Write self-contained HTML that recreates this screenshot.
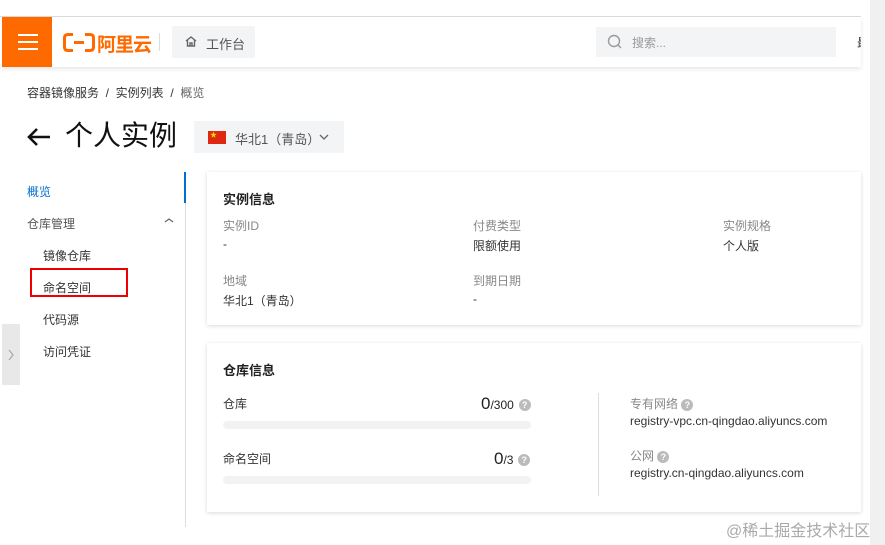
<!DOCTYPE html>
<html><head><meta charset="utf-8"><style>
*{margin:0;padding:0;box-sizing:border-box}
body{width:885px;height:545px;overflow:hidden;background:#fff;font-family:"Liberation Sans","Noto Sans CJK SC",sans-serif;position:relative;color:#333;font-size:12px}
.a{position:absolute}
.card{position:absolute;background:#fff;box-shadow:0 1px 4px rgba(0,0,0,.15)}
.lbl{color:#888;font-size:12px}
.q{display:inline-block;width:12px;height:12px;border-radius:50%;background:#bbb;color:#fff;font-size:9px;text-align:center;line-height:12px;font-weight:bold;vertical-align:middle}
.bar{position:absolute;height:8px;background:#f2f2f2;border-radius:4px}
</style></head><body>
<div class="a" style="left:0;top:16px;width:861px;height:1px;background:#ddd"></div>
<div class="a" style="left:0;top:17px;width:861px;height:50px;background:#fff;box-shadow:0 2px 4px rgba(0,0,0,.1)"></div>
<div class="a" style="left:2px;top:17px;width:50px;height:50px;background:#ff6a00">
 <div class="a" style="left:16px;top:17px;width:20px;height:2px;background:#fff"></div>
 <div class="a" style="left:16px;top:24px;width:20px;height:2px;background:#fff"></div>
 <div class="a" style="left:16px;top:31px;width:20px;height:2px;background:#fff"></div>
</div>
<svg class="a" style="left:63px;top:33px" width="32" height="19" viewBox="0 0 32 19"><path d="M10 1.5H5Q1.5 1.5 1.5 5v9q0 3.5 3.5 3.5h5M22 1.5h5q3.5 0 3.5 3.5v9q0 3.5-3.5 3.5h-5" fill="none" stroke="#ff6a00" stroke-width="3"/><path d="M11 9.5h10" stroke="#ff6a00" stroke-width="3"/></svg>
<div class="a" style="left:97px;top:30px;font-size:19px;font-weight:bold;color:#ff6a00;letter-spacing:-1px">阿里云</div>
<div class="a" style="left:159px;top:33px;width:1px;height:18px;background:#ddd"></div>
<div class="a" style="left:172px;top:26px;width:83px;height:32px;background:#f3f4f6;border-radius:2px"></div>
<svg class="a" style="left:184px;top:35px" width="14" height="13" viewBox="0 0 14 13"><path d="M2 6L7 2l5 4M3.5 5v6h7V5M6 11V8h2v3" fill="none" stroke="#666" stroke-width="1.4"/></svg>
<div class="a" style="left:206px;top:34px;font-size:13px;color:#555">工作台</div>
<div class="a" style="left:596px;top:27px;width:240px;height:30px;background:#f3f4f6"></div>
<svg class="a" style="left:607px;top:34px" width="15" height="15"><circle cx="7" cy="7" r="5.5" fill="none" stroke="#999" stroke-width="1.4"/><path d="M11 11l3 3" stroke="#999" stroke-width="1.4"/></svg>
<div class="a" style="left:632px;top:34px;font-size:12px;color:#999">搜索...</div>
<div class="a" style="left:857px;top:34px;font-size:12px;color:#333;width:4px;overflow:hidden">最</div>
<div class="a" style="left:870px;top:0;width:15px;height:545px;background:#f0f0f0"></div>
<div class="a" style="left:27px;top:84px;font-size:12px;color:#333">容器镜像服务 &nbsp;/&nbsp; 实例列表 &nbsp;/&nbsp; <span style="color:#666">概览</span></div>
<svg class="a" style="left:26px;top:127px" width="25" height="20" viewBox="0 0 25 20"><path d="M24 10H3M11 2L3 10l8 8" fill="none" stroke="#111" stroke-width="2.6"/></svg>
<div class="a" style="left:65px;top:117px;font-size:28px;color:#111;line-height:38px">个人实例</div>
<div class="a" style="left:194px;top:121px;width:150px;height:32px;background:#f3f4f6"></div>
<div class="a" style="left:208px;top:131px;width:18px;height:13px;background:#de2910"><span style="position:absolute;left:2px;top:-1px;color:#ffde00;font-size:7px">★</span></div>
<div class="a" style="left:235px;top:129px;font-size:13px;color:#555">华北1（青岛）</div>
<svg class="a" style="left:319px;top:133px" width="10" height="8"><path d="M1 2l4 4 4-4" fill="none" stroke="#666" stroke-width="1.3"/></svg>
<div class="a" style="left:185px;top:172px;width:1px;height:355px;background:#ddd"></div>
<div class="a" style="left:184px;top:172px;width:2px;height:31px;background:#0070cc"></div>
<div class="a" style="left:27px;top:183px;font-size:12px;color:#0070cc">概览</div>
<div class="a" style="left:27px;top:215px;font-size:12px;color:#555">仓库管理</div>
<svg class="a" style="left:164px;top:217px" width="10" height="7"><path d="M1 5l4-3 4 3" fill="none" stroke="#666" stroke-width="1.2"/></svg>
<div class="a" style="left:43px;top:247px;color:#333">镜像仓库</div>
<div class="a" style="left:43px;top:279px;color:#333">命名空间</div>
<div class="a" style="left:30px;top:268px;width:98px;height:29px;border:2px solid #e00"></div>
<div class="a" style="left:43px;top:311px;color:#333">代码源</div>
<div class="a" style="left:43px;top:343px;color:#333">访问凭证</div>
<div class="a" style="left:2px;top:324px;width:18px;height:61px;background:#e8e8e8"></div>
<svg class="a" style="left:7px;top:349px" width="8" height="12"><path d="M2 1l4 5-4 5" fill="none" stroke="#aaa" stroke-width="1.3"/></svg>
<div class="card" style="left:207px;top:172px;width:654px;height:153px">
 <div class="a" style="left:16px;top:17px;font-size:13px;font-weight:bold;color:#222">实例信息</div>
 <div class="a lbl" style="left:16px;top:45px">实例ID</div><div class="a" style="left:16px;top:65px">-</div>
 <div class="a lbl" style="left:266px;top:45px">付费类型</div><div class="a" style="left:266px;top:65px">限额使用</div>
 <div class="a lbl" style="left:516px;top:45px">实例规格</div><div class="a" style="left:516px;top:65px">个人版</div>
 <div class="a lbl" style="left:16px;top:100px">地域</div><div class="a" style="left:16px;top:120px">华北1（青岛）</div>
 <div class="a lbl" style="left:266px;top:100px">到期日期</div><div class="a" style="left:266px;top:120px">-</div>
</div>
<div class="card" style="left:207px;top:343px;width:654px;height:169px">
 <div class="a" style="left:16px;top:17px;font-size:13px;font-weight:bold;color:#222">仓库信息</div>
 <div class="a" style="left:16px;top:52px">仓库</div>
 <div class="a" style="left:274px;top:51px;font-size:17px;color:#222">0<span style="font-size:12px">/300</span> <span class="q">?</span></div>
 <div class="bar" style="left:16px;top:78px;width:308px"></div>
 <div class="a" style="left:16px;top:107px">命名空间</div>
 <div class="a" style="left:287px;top:106px;font-size:17px;color:#222">0<span style="font-size:12px">/3</span> <span class="q">?</span></div>
 <div class="bar" style="left:16px;top:133px;width:308px"></div>
 <div class="a" style="left:391px;top:50px;width:1px;height:103px;background:#ddd"></div>
 <div class="a lbl" style="left:423px;top:52px">专有网络 <span class="q">?</span></div>
 <div class="a" style="left:423px;top:71px">registry-vpc.cn-qingdao.aliyuncs.com</div>
 <div class="a lbl" style="left:423px;top:104px">公网 <span class="q">?</span></div>
 <div class="a" style="left:423px;top:123px">registry.cn-qingdao.aliyuncs.com</div>
</div>
<div class="a" style="left:726px;top:517px;font-size:16px;color:#aaa">@稀土掘金技术社区</div>
</body></html>
